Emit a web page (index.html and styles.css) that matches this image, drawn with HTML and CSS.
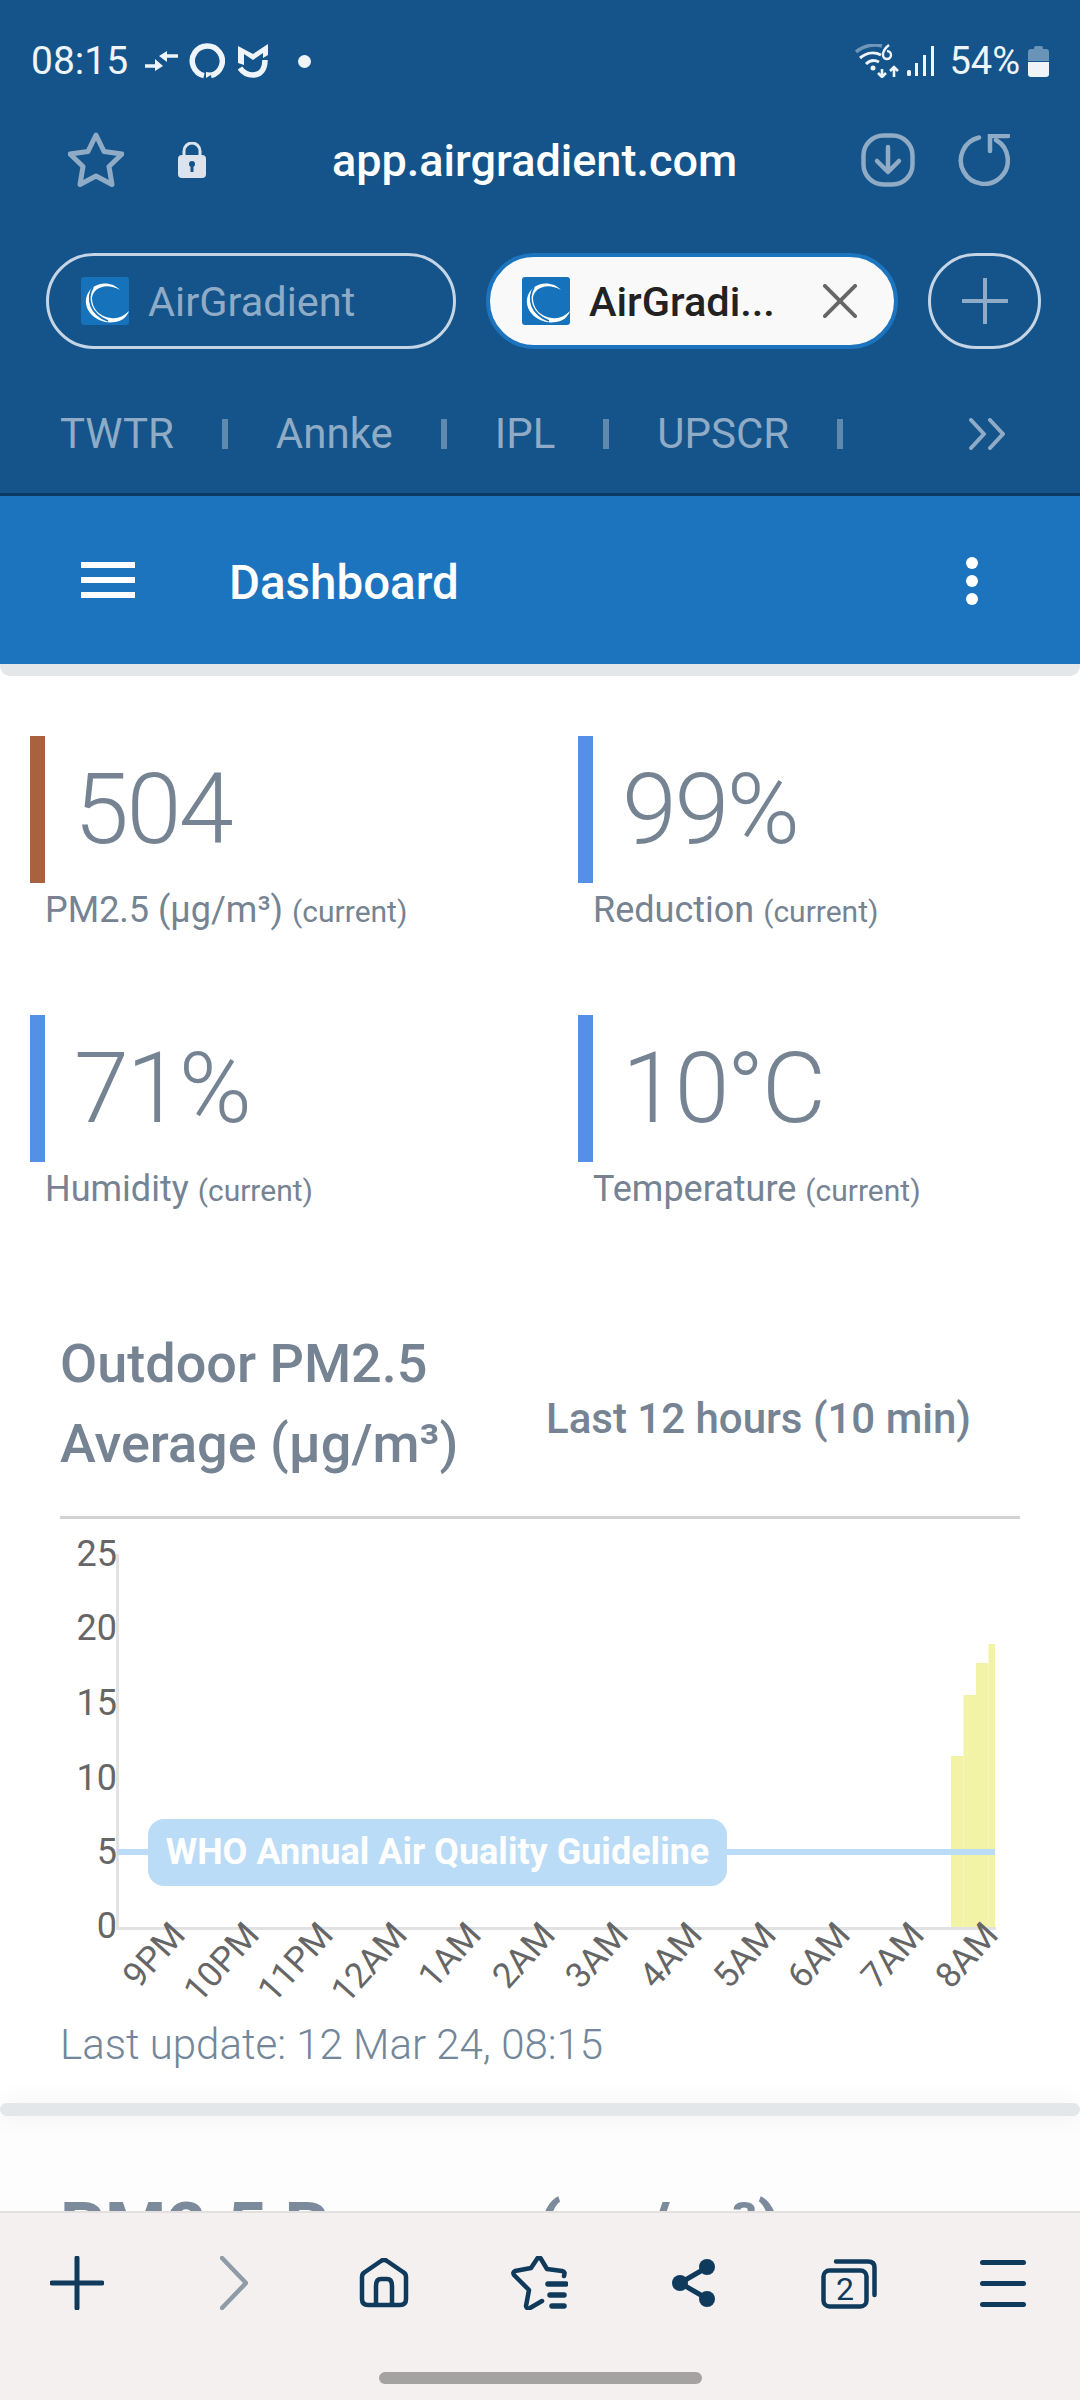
FILE: index.html
```html
<!DOCTYPE html>
<html lang="en">
<head>
<meta charset="utf-8">
<title>AirGradient Dashboard</title>
<link rel="stylesheet" href="styles.css">
</head>
<body>
<div class="phone">
  <header class="chrome">
    <div class="status">
      <div class="status-left">
        <span class="clock">08:15</span>
        <svg class="i-arrows" viewBox="0 0 34 20"><path d="M1 15H14M34 5H19" fill="none" stroke="#eef4f8" stroke-width="3.5"/><path d="M11 8l8 7-8 5zM23 0l-8 5 8 6z" fill="#eef4f8"/></svg>
        <svg class="i-ring" viewBox="0 0 36 36"><path d="M15 32.6A15 15 0 1 1 22 32.5" fill="none" stroke="#eef4f8" stroke-width="5.5"/><path d="M17 35l8-5-8-1z" fill="#eef4f8"/></svg>
        <svg class="i-mi" viewBox="0 0 30 35"><path d="M0 3L15 11 30 1V12L25 15V10L15 17 6 11V22L0 20z" fill="#eef4f8"/><path d="M2 25C6 31 11 32 15 32 23 32 27 26 27 17" fill="none" stroke="#eef4f8" stroke-width="5.5"/></svg>
        <span class="status-dot"></span>
      </div>
      <div class="status-right">
        <svg class="i-wifi" viewBox="0 0 46 34"><path d="M1 8C9 1 20 0 27 2" fill="none" stroke="#6f97b9" stroke-width="3.5"/><path d="M5 14C12 8 20 8 26 11M11 20C15 16 20 16 24 18" fill="none" stroke="#eef4f8" stroke-width="3"/><circle cx="18" cy="24" r="2.5" fill="#eef4f8"/><path d="M27 25l0 8M23 29l4 4 4-4M39 33V23M35 27l4-4 4 4" fill="none" stroke="#eef4f8" stroke-width="2.6"/><path d="M34 1C30 4 28 8 28 11a4 4 0 1 0 4-4" fill="none" stroke="#eef4f8" stroke-width="2.4"/></svg>
        <svg class="i-signal" viewBox="0 0 28 30"><rect x="0" y="24" width="4" height="6" rx="1.5" fill="#eef4f8"/><rect x="8" y="17" width="3" height="13" fill="#eef4f8"/><rect x="16" y="9" width="3" height="21" fill="#eef4f8"/><rect x="24" y="0" width="3" height="30" fill="#eef4f8"/></svg>
        <span class="clock pct">54%</span>
        <svg class="i-batt" viewBox="0 0 21 31"><path d="M6 2a2 2 0 0 1 2-2h5a2 2 0 0 1 2 2v1h3a3 3 0 0 1 3 3v9H0V6a3 3 0 0 1 3-3h3z" fill="#6a94b7"/><path d="M0 16h21v12a3 3 0 0 1-3 3H3a3 3 0 0 1-3-3z" fill="#eef4f8"/></svg>
      </div>
    </div>
    <div class="urlbar">
      <svg class="i-star" viewBox="0 0 56 56"><path d="M28 3l8 16.500 18 2.500-13 12.500 3 18-16-8.500-16 8.500 3-18L2 22l18-2.500z" fill="none" stroke="#8fabc6" stroke-width="5" stroke-linejoin="round"/></svg>
      <svg class="i-lock" viewBox="0 0 28 36"><path d="M6 15V9a8 8 0 0 1 16 0v6" fill="none" stroke="#dde3ec" stroke-width="3"/><rect y="13" width="28" height="23" rx="4" fill="#dde3ec"/><circle cx="14" cy="22" r="3" fill="#14548a"/><rect x="12.500" y="22" width="3" height="8" fill="#14548a"/></svg>
      <span class="url">app.airgradient.com</span>
      <svg class="i-down" viewBox="0 0 54 54"><rect x="2.500" y="2.500" width="49" height="49" rx="20" fill="none" stroke="#8fabc6" stroke-width="4.500"/><path d="M27 14V38M16 28L27 39 38 28" fill="none" stroke="#8fabc6" stroke-width="4.500" stroke-linecap="round" stroke-linejoin="round"/></svg>
      <svg class="i-reload" viewBox="0 0 52 52"><path d="M21 3.500A23.500 23.500 0 1 0 38 6" fill="none" stroke="#8fabc6" stroke-width="4.500" stroke-linecap="round"/><path d="M32 17V2H50" fill="none" stroke="#8fabc6" stroke-width="4.500" stroke-linecap="round"/></svg>
    </div>
    <div class="tabs">
      <div class="tab">
        <svg class="favicon" viewBox="0 0 48 48"><rect width="48" height="48" rx="3" fill="#1572bb"/><path d="M39 13C29 2 8 5 5 22 3 36 19 48 34 45 41 44 46 40 48 34 42 40 36 42 30 41 18 40 11 31 11 21 12 11 25 5 39 13z" fill="#fff"/><path d="M12 10C5 22 9 37 27 44" fill="none" stroke="#1572bb" stroke-width="1.800"/></svg>
        <span class="tab-label">AirGradient</span>
      </div>
      <div class="tab tab-active">
        <svg class="favicon" viewBox="0 0 48 48"><rect width="48" height="48" rx="3" fill="#1572bb"/><path d="M39 13C29 2 8 5 5 22 3 36 19 48 34 45 41 44 46 40 48 34 42 40 36 42 30 41 18 40 11 31 11 21 12 11 25 5 39 13z" fill="#fff"/><path d="M12 10C5 22 9 37 27 44" fill="none" stroke="#1572bb" stroke-width="1.800"/></svg>
        <span class="tab-label tab-label-active">AirGradi...</span>
        <svg class="i-close" viewBox="0 0 36 36"><path d="M2 2L34 34M34 2L2 34" stroke="#666" stroke-width="4" stroke-linecap="round"/></svg>
      </div>
      <div class="tab-new">
        <svg class="i-plus-light" viewBox="0 0 46 46"><path d="M23 1V45M1 23H45" stroke="#8fabc6" stroke-width="4" stroke-linecap="round"/></svg>
      </div>
    </div>
    <nav class="bookmarks">
      <span>TWTR</span><i class="sep"></i>
      <span>Annke</span><i class="sep"></i>
      <span>IPL</span><i class="sep"></i>
      <span>UPSCR</span><i class="sep"></i>
      <svg class="i-more" viewBox="0 0 38 32"><path d="M2 2L15 16 2 30M21 2L34 16 21 30" fill="none" stroke="#8fabc6" stroke-width="4" stroke-linecap="round" stroke-linejoin="round"/></svg>
    </nav>
  </header>

  <div class="appbar">
    <div class="burger"><i></i><i></i><i></i></div>
    <span class="appbar-title">Dashboard</span>
    <div class="kebab"><i></i><i></i><i></i></div>
  </div>
  <div class="band"></div>

  <main class="content">
    <section class="stats">
      <div class="stat">
        <div class="stat-value brown">504</div>
        <div class="stat-label">PM2.5 (µg/m³) <small>(current)</small></div>
      </div>
      <div class="stat">
        <div class="stat-value">99%</div>
        <div class="stat-label">Reduction <small>(current)</small></div>
      </div>
      <div class="stat">
        <div class="stat-value">71%</div>
        <div class="stat-label">Humidity <small>(current)</small></div>
      </div>
      <div class="stat">
        <div class="stat-value">10°C</div>
        <div class="stat-label">Temperature <small>(current)</small></div>
      </div>
    </section>

    <section class="panel">
      <div class="panel-head">
        <h2 class="panel-title">Outdoor PM2.5<br>Average (µg/m³)</h2>
        <span class="panel-range">Last 12 hours (10 min)</span>
      </div>
      <svg class="chart" viewBox="60 1530 960 480">
        <rect x="951" y="1756" width="12.500" height="171" fill="#f2f3a7"/>
        <rect x="963.500" y="1695" width="12.500" height="232" fill="#f2f3a7"/>
        <rect x="976" y="1663" width="12.500" height="264" fill="#f2f3a7"/>
        <rect x="988.500" y="1644" width="6.500" height="283" fill="#f2f3a7"/>
        <path d="M117.500 1554V1928.500H996" fill="none" stroke="#e2e2e2" stroke-width="3"/>
        <rect x="117" y="1849" width="878" height="6" fill="#bbdcf6"/>
        <rect x="148" y="1819" width="579" height="67" rx="16" fill="#bbdcf6"/>
        <text class="who" x="437.500" y="1864">WHO Annual Air Quality Guideline</text>
        <g class="ytick">
          <text x="117" y="1566">25</text>
          <text x="117" y="1640">20</text>
          <text x="117" y="1715">15</text>
          <text x="117" y="1790">10</text>
          <text x="117" y="1864">5</text>
          <text x="117" y="1938">0</text>
        </g>
        <g class="xtick">
          <text transform="translate(187 1936) rotate(-48)">9PM</text>
          <text transform="translate(261 1936) rotate(-48)">10PM</text>
          <text transform="translate(335 1936) rotate(-48)">11PM</text>
          <text transform="translate(409 1936) rotate(-48)">12AM</text>
          <text transform="translate(483 1936) rotate(-48)">1AM</text>
          <text transform="translate(557 1936) rotate(-48)">2AM</text>
          <text transform="translate(630 1936) rotate(-48)">3AM</text>
          <text transform="translate(704 1936) rotate(-48)">4AM</text>
          <text transform="translate(778 1936) rotate(-48)">5AM</text>
          <text transform="translate(852 1936) rotate(-48)">6AM</text>
          <text transform="translate(926 1936) rotate(-48)">7AM</text>
          <text transform="translate(1000 1936) rotate(-48)">8AM</text>
        </g>
      </svg>
      <p class="updated">Last update: 12 Mar 24, 08:15</p>
    </section>
    <div class="band band-inner"></div>
    <section class="panel panel-next">
      <h2 class="panel-title">PM2.5 Ranges (µg/m³)</h2>
    </section>
  </main>

  <footer class="bottombar">
    <div class="bottom-icons">
      <svg class="b-plus" viewBox="0 0 54 54"><path d="M27 2V52M2 27H52" stroke="#0f3a5c" stroke-width="5" stroke-linecap="round"/></svg>
      <svg class="b-next" viewBox="0 0 28 54"><path d="M2 2L26 27 2 52" fill="none" stroke="#8f9ca7" stroke-width="4.500" stroke-linecap="round" stroke-linejoin="round"/></svg>
      <svg class="b-home" viewBox="0 0 50 50"><path d="M3 19c0-2 1-4 3-5L22 3c2-1.500 4-1.500 6 0l16 11c2 1 3 3 3 5v22c0 4-2 6-6 6H9c-4 0-6-2-6-6z" fill="none" stroke="#0f3a5c" stroke-width="4.500" stroke-linejoin="round"/><path d="M17 47V28c0-5 2-7 5-7h6c3 0 5 2 5 7v19" fill="none" stroke="#0f3a5c" stroke-width="4.500"/></svg>
      <svg class="b-star" viewBox="0 0 58 54"><path d="M16 50L19 34 4 19c-1-2-1-3 1-4l16-3L27 3c1-2 3-2 4 0l6 10 15 2c3 1 3 2 2 5M16 50c0 2 2 3 4 2l12-7" fill="none" stroke="#0f3a5c" stroke-width="4.500" stroke-linecap="round" stroke-linejoin="round"/><path d="M38 28H56M40 39H54M42 50H54" stroke="#0f3a5c" stroke-width="5.500" stroke-linecap="round"/></svg>
      <svg class="b-share" viewBox="0 0 44 48"><path d="M34 9L8 24 34 39" fill="none" stroke="#0f3a5c" stroke-width="5"/><circle cx="35" cy="8" r="8" fill="#0f3a5c"/><circle cx="8" cy="24" r="8" fill="#0f3a5c"/><circle cx="35" cy="40" r="8" fill="#0f3a5c"/></svg>
      <div class="b-tabs">
        <svg class="b-tabs-svg" viewBox="0 0 56 50"><rect x="2.500" y="11.500" width="43" height="36" rx="6" fill="none" stroke="#0f3a5c" stroke-width="4.500"/><path d="M15 2.500H47c4 0 6.500 2 6.500 6V36" fill="none" stroke="#0f3a5c" stroke-width="4.500" stroke-linecap="round"/></svg>
        <span class="b-count">2</span>
      </div>
      <div class="b-menu"><i></i><i></i><i></i></div>
    </div>
    <div class="home-indicator"></div>
  </footer>
</div>
</body>
</html>
```
FILE: styles.css
```css
* { box-sizing: border-box; }
html, body { margin: 0; padding: 0; }
body { width: 1080px; height: 2400px; overflow: hidden; font-family: Roboto, "Noto Sans", sans-serif; background: #fff; }
svg { display: block; flex: none; }
.phone { width: 1080px; height: 2400px; display: flex; flex-direction: column; }

.chrome { height: 496px; flex: none; background: #14548a; border-bottom: 3px solid #0d3a62; }

.status { height: 122px; display: flex; justify-content: space-between; align-items: center; padding: 0 31px 0 31px; color: #eef4f8; }
.status-left, .status-right { display: flex; align-items: center; }
.clock { font-size: 39px; line-height: 1; }
.pct { font-size: 38px; margin-left: 14px; }
.i-arrows { width: 34px; height: 20px; margin-left: 16px; }
.i-ring { width: 36px; height: 36px; margin-left: 11px; }
.i-mi { width: 30px; height: 35px; margin: -2px 0 0 13px; }
.status-dot { width: 13px; height: 13px; border-radius: 50%; background: #eef4f8; margin-left: 30px; }
.i-wifi { width: 46px; height: 34px; margin-top: -1px; }
.i-signal { width: 28px; height: 30px; margin-left: 6px; }
.i-batt { width: 21px; height: 31px; margin-left: 8px; }

.urlbar { height: 76px; display: flex; align-items: center; padding-left: 68px; }
.i-star { width: 56px; height: 56px; }
.i-lock { width: 28px; height: 36px; margin-left: 54px; }
.url { font-size: 45px; font-weight: 500; color: #fff; margin-left: 126px; width: 530px; }
.i-down { width: 54px; height: 54px; margin-left: -1px; }
.i-reload { width: 52px; height: 52px; margin-left: 43px; }

.tabs { display: flex; margin-top: 55px; padding-left: 46px; gap: 30px; }
.tab { width: 410px; height: 96px; border: 3px solid #c5d5e5; border-radius: 48px; display: flex; align-items: center; padding-left: 32px; }
.tab-active { width: 412px; background: #f9f9f9; border: 4px solid #1b74bd; }
.favicon { width: 48px; height: 48px; }
.tab-label { font-size: 41.5px; color: #8fabc6; margin-left: 19px; }
.tab-label-active { color: #222; font-weight: 500; }
.i-close { width: 34px; height: 34px; margin-left: auto; margin-right: 37px; }
.tab-new { width: 113px; height: 96px; border: 3px solid #c5d5e5; border-radius: 48px; display: flex; align-items: center; justify-content: center; }
.i-plus-light { width: 46px; height: 46px; }

.bookmarks { display: flex; align-items: center; gap: 48px; height: 144px; padding: 25px 73px 0 60px; font-size: 42px; color: #8fabc6; }
.sep { width: 6px; height: 30px; background: #5f8aae; }
.i-more { width: 38px; height: 32px; margin-left: auto; }

.appbar { height: 168px; flex: none; background: #1b74bd; display: flex; align-items: center; padding: 0 102px 0 81px; }
.burger { width: 54px; display: flex; flex-direction: column; gap: 9px; }
.burger i { height: 6px; background: #fff; }
.appbar-title { font-size: 47.5px; font-weight: 500; color: #fff; margin: 6px 0 0 94px; }
.kebab { margin: 2px 0 0 auto; display: flex; flex-direction: column; gap: 6px; }
.kebab i { width: 12px; height: 12px; border-radius: 50%; background: #fff; }

.band { height: 12px; flex: none; background: #e3e7ea; border-radius: 0 0 10px 10px; }
.band-inner { border-radius: 7px; height: 13px; box-shadow: 0 0 24px rgba(0, 0, 0, .07); position: relative; margin-top: 33px; }

.content { flex: 1; min-height: 0; overflow: hidden; color: #758393; }
.stats { display: grid; grid-template-columns: 548px 1fr; grid-auto-rows: 279px; padding: 60px 0 0 30px; }
.stat-value { height: 147px; line-height: 147px; border-left: 15px solid #5390e6; padding-left: 29px; font-size: 99px; font-weight: 300; letter-spacing: -2.5px; }
.brown { border-left-color: #a9623f; }
.stat-label { font-size: 36px; line-height: 42px; padding: 6px 0 0 15px; white-space: nowrap; }
.stat-label small { font-size: 30px; }

.panel { padding: 0 60px; }
.panel-head { margin-top: 32px; height: 193px; border-bottom: 3px solid #d2d2d2; display: flex; align-items: center; }
.panel-title { margin: -2px 0 0; font-size: 54px; font-weight: 500; line-height: 80px; color: #758393; align-self: flex-start; }
.panel-range { font-size: 42px; font-weight: 500; margin: 0 49px 6px auto; }
.chart { width: 960px; height: 480px; margin-top: 11px; }
.chart text { font-family: Roboto, "Noto Sans", sans-serif; }
.who { font-size: 36px; font-weight: 700; fill: #fff; text-anchor: middle; }
.ytick text { font-size: 36px; fill: #666; text-anchor: end; }
.xtick text { font-size: 35px; fill: #666; text-anchor: end; }
.updated { margin: 10px 0 0; font-size: 42px; font-weight: 300; color: #73869a; line-height: 50px; white-space: nowrap; }
.panel-next { padding-top: 74px; background: #fdfdfd; height: 140px; }
.panel-next .panel-title { font-size: 70px; font-weight: 700; color: #7b8b9c; white-space: nowrap; }

.bottombar { height: 189px; flex: none; background: #f4f0f0; border-top: 2px solid #e4e0e0; position: relative; z-index: 1; display: flex; flex-direction: column; align-items: center; }
.bottom-icons { width: 100%; height: 159px; display: flex; align-items: flex-start; padding: 43px 0 0 50px; }
.b-plus { width: 54px; height: 54px; }
.b-next { width: 28px; height: 54px; margin-left: 116px; }
.b-home { width: 50px; height: 50px; margin: 2px 0 0 111px; }
.b-star { width: 58px; height: 54px; margin-left: 101px; }
.b-share { width: 44px; height: 48px; margin: 3px 0 0 104px; }
.b-tabs { position: relative; width: 56px; height: 50px; margin: 3px 0 0 105px; }
.b-tabs-svg { width: 56px; height: 50px; }
.b-count { position: absolute; left: 2px; right: 10px; top: 12px; text-align: center; font-size: 32px; line-height: 36px; color: #0f3a5c; }
.b-menu { width: 46px; display: flex; flex-direction: column; gap: 16px; margin: 4px 0 0 103px; }
.b-menu i { height: 5px; border-radius: 3px; background: #0f3a5c; }
.home-indicator { width: 323px; height: 12px; border-radius: 6px; background: #a5a3a1; }
```
